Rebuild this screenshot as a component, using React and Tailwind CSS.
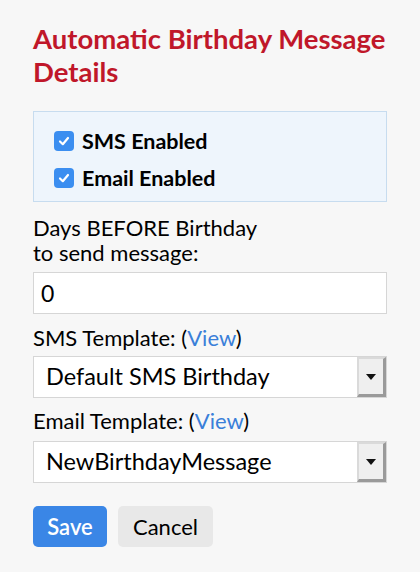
import React from "react";

function Check() {
  return (
    <span className="w-[20px] h-[20px] rounded-[4px] bg-[#3b8ef0] flex items-center justify-center shrink-0">
      <svg width="12" height="12" viewBox="0 0 12 12" fill="none">
        <path d="M2 6.5 L4.8 9.2 L10 3" stroke="white" strokeWidth="2.2" strokeLinecap="round" strokeLinejoin="round" />
      </svg>
    </span>
  );
}

function Select({ value }) {
  return (
    <div className="flex h-[42px] border border-[#d6d6d6] bg-white">
      <div className="flex-1 flex items-center pl-[12px] text-[23.5px] text-black">{value}</div>
      <div className="w-[29px] h-full bg-[#efefef] border-t-2 border-l-2 border-t-[#dadada] border-l-[#dadada] border-r-[3px] border-b-[3px] border-r-[#9a9a9a] border-b-[#9a9a9a] flex items-center justify-center">
        <svg width="10" height="6" viewBox="0 0 10 6"><path d="M0 0 H10 L5 6 Z" fill="#111" /></svg>
      </div>
    </div>
  );
}

export default function App() {
  return (
    <div className="w-[420px] h-[572px] bg-[#f7f7f7] px-[33px] pt-[22px] font-['Lato',sans-serif] text-black">
      <h1 className="text-[27.5px] leading-[33px] font-bold text-[#c0172a]">Automatic Birthday Message Details</h1>
      <div className="mt-[23px] border border-[#c7dcef] bg-[#eef5fc] px-[20px] pt-[19px] pb-[13px] flex flex-col gap-[17px]">
        <div className="flex items-center gap-[8px] text-[21.5px] leading-[20px] font-bold"><Check />SMS Enabled</div>
        <div className="flex items-center gap-[8px] text-[21.5px] leading-[20px] font-bold"><Check />Email Enabled</div>
      </div>
      <div className="mt-[13px] text-[22px] leading-[25px]">Days BEFORE Birthday<br />to send message:</div>
      <div className="mt-[7px] h-[42px] border border-[#d6d6d6] bg-white flex items-center pl-[7px] text-[23px]">0</div>
      <div className="mt-[11px] text-[22px] leading-[25px]">SMS Template: (<span className="text-[#3a7fd9]">View</span>)</div>
      <div className="mt-[6px]"><Select value="Default SMS Birthday" /></div>
      <div className="mt-[10px] text-[22px] leading-[25px]">Email Template: (<span className="text-[#3a7fd9]">View</span>)</div>
      <div className="mt-[8px]"><Select value="NewBirthdayMessage" /></div>
      <div className="mt-[23px] flex gap-[11px]">
        <button className="w-[74px] h-[41px] rounded-[5px] bg-[#3a86e6] text-white text-[22px] font-semibold">Save</button>
        <button className="w-[95px] h-[41px] rounded-[5px] bg-[#e8e8e8] text-black text-[22px]">Cancel</button>
      </div>
    </div>
  );
}
